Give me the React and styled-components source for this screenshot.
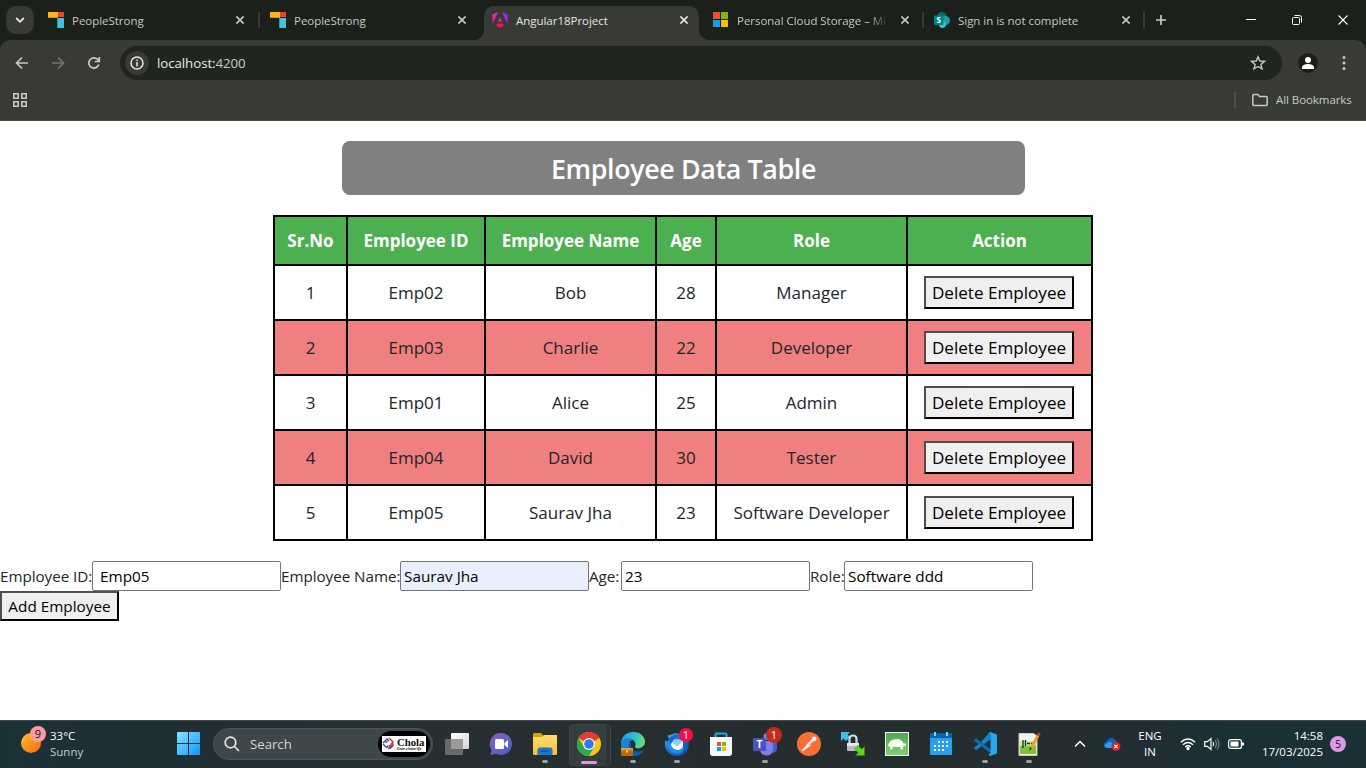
import React from 'react';
import styled, { createGlobalStyle, css } from 'styled-components';

const GlobalStyle = createGlobalStyle`
  * { box-sizing: border-box; }
  html, body { margin: 0; padding: 0; overflow: hidden; }
  body, button, input { font-family: "Open Sans", "Noto Sans", sans-serif; }
  svg { display: block; flex: none; }
`;

const Screen = styled.div`
  display: flex;
  flex-direction: column;
  width: 1366px;
  height: 768px;
  background: #fff;
  overflow: hidden;
`;

/* ---------- browser ---------- */

const TabStrip = styled.div`
  display: flex;
  align-items: flex-start;
  height: 40px;
  padding: 6px 0 0 6px;
  background: #1c201b;
  color: #c6cac1;
`;

const TabSearch = styled.div`
  display: grid;
  place-items: center;
  width: 28px;
  height: 28px;
  margin-right: 6px;
  border-radius: 10px;
  background: #383b35;
`;

const curve = css`
  content: "";
  position: absolute;
  bottom: 0;
  width: 10px;
  height: 10px;
`;

const Tab = styled.div`
  position: relative;
  display: flex;
  align-items: center;
  width: 215px;
  height: 34px;
  padding: 0 9px 6px 8px;
  font-size: 11.5px;
  ${(p) => p.$active && css`
    background: #383b35;
    color: #e4e7df;
    border-radius: 10px 10px 0 0;
    &::before { ${curve} left: -10px; background: radial-gradient(circle at 0 0, transparent 9.5px, #383b35 10.5px); }
    &::after { ${curve} right: -10px; background: radial-gradient(circle at 100% 0, transparent 9.5px, #383b35 10.5px); }
  `}
`;

const TabTitle = styled.div`
  flex: none;
  width: 151px;
  margin: 1px 13px 0 8px;
  white-space: nowrap;
  letter-spacing: ${(p) => (p.$fade ? -0.04 : -0.03)}px;
  ${(p) => p.$fade && css`mask-image: linear-gradient(90deg, #000 132px, transparent 151px);`}
`;

const Separator = styled.div`
  width: 2px;
  height: 16px;
  margin: 6px 2px 0 ${(p) => p.$left}px;
  background: ${(p) => (p.$hidden ? 'transparent' : '#383b35')};
`;

const NewTab = styled.div`
  display: grid;
  place-items: center;
  width: 28px;
  height: 28px;
`;

const WindowControls = styled.div`
  display: flex;
  width: 138px;
  height: 28px;
  margin-left: auto;
  > * { flex: 1; display: grid; place-items: center; }
`;

const ToolbarBack = styled.div`background: #1c201b;`;

const Toolbar = styled.div`
  display: flex;
  align-items: center;
  height: 40px;
  padding: 6px 14px 0 14px;
  border-radius: 10px 10px 0 0;
  background: #383b35;
`;

const NavButton = styled.div`
  width: 16px;
  margin-right: 20px;
  color: ${(p) => (p.$dim ? '#73766f' : '#c6cac1')};
`;

const AddressBar = styled.div`
  display: flex;
  flex: none;
  align-items: center;
  width: 1162px;
  height: 34px;
  margin-left: -2px;
  padding: 0 16px 0 5px;
  border-radius: 17px;
  background: #21251f;
  color: #c9cdc4;
  font-size: 13.3px;
  letter-spacing: -0.07px;
`;

const SiteInfo = styled.div`
  display: grid;
  place-items: center;
  width: 24px;
  height: 24px;
  margin-right: 8px;
  border-radius: 50%;
  background: #383b35;
`;

const Host = styled.span`color: #e9ece4;`;
const StarSlot = styled.div`margin-left: auto;`;

const Avatar = styled.div`
  display: grid;
  flex: none;
  place-items: center;
  width: 20px;
  height: 20px;
  margin: 0 18px 0 16px;
  border-radius: 50%;
  background: #1a1e19;
`;

const MenuSlot = styled.div`
  display: flex;
  flex: 1;
  justify-content: flex-end;
`;

const Bookmarks = styled.div`
  display: flex;
  align-items: center;
  height: 41px;
  padding: 0 14px 1px 13px;
  border-bottom: 1px solid #454842;
  background: #383b35;
  color: #c6cac1;
  font-size: 11.5px;
`;

const BookmarkRule = styled.div`
  width: 2px;
  height: 16px;
  margin: 0 16px 0 auto;
  background: #4d514a;
`;

const AllBookmarks = styled.div`
  width: 76px;
  margin-left: 8px;
  white-space: nowrap;
  letter-spacing: -0.07px;
`;

/* ---------- page ---------- */

const Page = styled.main`
  flex: 1;
  padding-top: 20px;
  color: #212529;
`;

const Title = styled.h1`
  width: 683px;
  height: 54px;
  margin: 0 auto 20px 342px;
  border-radius: 8px;
  background: #808080;
  color: #fff;
  font-size: 26.8px;
  font-weight: 600;
  line-height: 56px;
  letter-spacing: -0.35px;
  text-align: center;
`;

const Table = styled.table`
  width: 820px;
  margin-left: 273px;
  table-layout: fixed;
  border-collapse: collapse;
  font-size: 17px;
  text-align: center;
`;

const Th = styled.th`
  height: 49px;
  padding: 0;
  border: 2px solid #000;
  background: #4caf50;
  color: #fff;
  font-weight: 700;
  white-space: nowrap;
`;

const Row = styled.tr`background: ${(p) => (p.$striped ? '#f08080' : '#fff')};`;

const Td = styled.td`
  height: 55px;
  padding: 0;
  border: 2px solid #000;
  white-space: nowrap;
`;

const Button = styled.button`
  display: block;
  width: ${(p) => p.$width}px;
  height: ${(p) => p.$height}px;
  margin: 0 0 0 ${(p) => p.$indent || 0}px;
  padding: 0;
  border: 2px solid;
  border-color: #4f4f4f #000 #000 #4f4f4f;
  background: #efefef;
  color: #000;
  font-size: ${(p) => p.$size}px;
  white-space: nowrap;
`;

const Form = styled.form`
  display: flex;
  margin-top: 20px;
  font-size: 15.2px;
`;

const Label = styled.label`
  width: ${(p) => p.$width}px;
  height: 30px;
  line-height: 31px;
  white-space: nowrap;
  letter-spacing: -0.03px;
`;

const Input = styled.input`
  width: 189px;
  height: 30px;
  padding: 0 3px 1px;
  border: 1px solid #767676;
  border-radius: 2px;
  outline: 0;
  background: ${(p) => (p.$filled ? '#e8f0fe' : '#fff')};
  color: #000;
  font-size: 15.3px;
`;

/* ---------- taskbar ---------- */

const Taskbar = styled.footer`
  display: flex;
  align-items: center;
  height: 48px;
  padding-bottom: 2px;
  border-top: 1px solid #3c484b;
  background: linear-gradient(90deg, #1b3138 0, #1f2f34 150px, #262f31 430px, #252c2e 900px, #242d30 1080px, #1b3036 1220px, #1a3036 100%);
  color: #fff;
  font-size: 11.5px;
`;

const Weather = styled.div`
  display: flex;
  align-items: center;
  width: 172px;
  padding-left: 18px;
`;

const WeatherText = styled.div`
  margin-left: 4px;
  line-height: 16px;
  color: #c8cfd1;
  b { display: block; font-weight: 400; color: #fff; }
`;

const StartSlot = styled.div`
  width: 41px;
  padding-left: 5px;
`;

const Search = styled.div`
  display: flex;
  align-items: center;
  width: 220px;
  height: 32px;
  margin-right: 2px;
  padding: 0 2px 0 10px;
  border: 1px solid #4c5658;
  border-radius: 16px;
  background: #3e484a;
  color: #d2d6d7;
  font-size: 13.2px;
  > span { margin-left: 10px; }
`;

const Promo = styled.div`
  display: flex;
  align-items: center;
  width: 52px;
  height: 26px;
  margin-left: auto;
  padding-left: 4px;
  border-radius: 13px;
  background: #000;
`;

const PromoCard = styled.div`
  display: flex;
  align-items: center;
  width: 44px;
  height: 16px;
  background: #fff;
`;

const PromoText = styled.div`
  margin-left: 2px;
  color: #111;
  font: 700 10.8px/10px "Liberation Serif", serif;
  letter-spacing: -0.05px;
  white-space: nowrap;
  small { display: block; font: italic 700 3.6px/4px "Liberation Serif", serif; letter-spacing: -0.1px; }
`;

const AppSlot = styled.div`
  position: relative;
  display: grid;
  place-items: center;
  width: 44px;
  height: 40px;
  ${(p) => p.$focused && css`
    &::before, &::after {
      content: "";
      position: absolute;
      top: 0;
      left: 2px;
      height: 40px;
      border: 1px solid #3b4345;
      border-radius: 4px;
    }
    &::before { width: 40px; background: #2b3335; }
    &::after { width: 35px; background: #363d3f; }
  `}
  > svg { position: relative; z-index: 1; }
`;

const Indicator = styled.i`
  position: absolute;
  z-index: 2;
  bottom: ${(p) => (p.$focused ? 0 : 1)}px;
  left: 50%;
  width: ${(p) => (p.$focused ? 16 : 6)}px;
  height: 3px;
  border-radius: 2px;
  background: ${(p) => (p.$focused ? '#d998e0' : '#9a9fa0')};
  transform: translateX(-50%);
`;

const AppBadge = styled.span`
  position: absolute;
  z-index: 2;
  top: ${(p) => p.$top}px;
  left: ${(p) => p.$left}px;
  width: ${(p) => p.$size}px;
  height: ${(p) => p.$size}px;
  border-radius: 50%;
  background: ${(p) => p.$color};
  color: ${(p) => p.$ink || '#fff'};
  font-size: ${(p) => p.$font || 11}px;
  line-height: ${(p) => p.$size}px;
  text-align: center;
`;

const WeatherIcon = styled.div`
  position: relative;
  width: 28px;
  height: 32px;
`;

const Tray = styled.div`
  display: flex;
  align-items: center;
  margin-left: 23px;
`;

const Stacked = styled.div`
  width: ${(p) => p.$width}px;
  margin-left: ${(p) => p.$left}px;
  text-align: ${(p) => p.$align};
  line-height: 16px;
  white-space: nowrap;
`;

const TrayIcon = styled.div`margin-left: ${(p) => p.$left}px;`;

const CountBadge = styled.div`
  width: 16px;
  height: 16px;
  margin-left: 7px;
  border-radius: 50%;
  background: #dd9ae3;
  color: #111;
  font-size: 10px;
  line-height: 16px;
  text-align: center;
`;

/* ---------- icons ---------- */

const Cross = ({ size = 8, w = 1.6, color = 'currentColor' }) => (
  <svg width={size} height={size} viewBox="0 0 8 8" fill="none" stroke={color} strokeWidth={w}><path d="M.4.4l7.2 7.2M7.6.4L.4 7.6" /></svg>
);

const PeopleStrong = () => (
  <svg width="16" height="16"><path fill="#ffb612" d="M0 0h10v5H0z" /><path fill="#ef4136" d="M10 0h6v5h-6z" /><path fill="#41c4dc" d="M10 6h6v10h-6z" /><path fill="#1e9eb8" d="M9 6h1v10H9z" /><path fill="#d99200" d="M0 5h10v1H0z" /></svg>
);

const AngularIcon = () => (
  <svg width="16" height="16" viewBox="0 0 16 16">
    <defs><linearGradient id="ng" x1="0" y1=".7" x2="1" y2=".2"><stop stopColor="#f5187b" /><stop offset=".5" stopColor="#e52bd0" /><stop offset="1" stopColor="#7a1cff" /></linearGradient></defs>
    <path fill="url(#ng)" d="M10 0l5.8 2.5-.6 9L10 0zM6 0L.2 2.500l.6 9L6 0zM8 5.200L6.200 9.400h3.600z" />
    <path fill="#f8114e" d="M5.300 11.500h5.400l1.300 2.200L8 16l-4-2.300z" />
  </svg>
);

const MicrosoftIcon = () => (
  <svg width="16" height="16"><path fill="#f25022" d="M0 0h7v7H0z" /><path fill="#7fba00" d="M8 0h7v7H8z" /><path fill="#00a4ef" d="M0 8h7v7H0z" /><path fill="#ffb900" d="M8 8h7v7H8z" /></svg>
);

const SharePointIcon = () => (
  <svg width="16" height="16">
    <circle cx="8" cy="5" r="5" fill="#036c70" /><circle cx="11.500" cy="8.500" r="4.500" fill="#1a9ba1" /><circle cx="8.500" cy="12.500" r="3.400" fill="#37c6d0" />
    <rect y="3.500" width="9.500" height="9.500" rx="1" fill="#038387" />
    <text x="4.800" y="11.200" fill="#fff" fontFamily="Open Sans" fontWeight="700" fontSize="8" textAnchor="middle">S</text>
  </svg>
);

const Arrow = ({ flip }) => (
  <svg width="16" height="16" fill="none" stroke="currentColor" strokeWidth="1.700"><path transform={flip ? 'matrix(-1 0 0 1 16 0)' : undefined} d="M14 8H3M8 2.500L2.500 8 8 13.500" /></svg>
);

const Reload = () => (
  <svg width="16" height="16" fill="none" stroke="currentColor" strokeWidth="1.700"><path d="M12.800 9.500A5.100 5.100 0 1 1 11.600 4.400l1.500 1.700M13.300 2v4.500H8.800" /></svg>
);

const AppsGrid = () => (
  <svg width="14" height="14" fill="none" stroke="#c6cac1" strokeWidth="1.600"><path d="M.8.800h4.400v4.400H.8zM8.800.800h4.400v4.400H8.800zM.8 8.800h4.400v4.400H.8zM8.800 8.800h4.400v4.400H8.800z" /></svg>
);

const StartIcon = () => (
  <svg width="23" height="23">
    <defs><linearGradient id="win" x1="0" y1="0" x2="1" y2="1"><stop stopColor="#86e4ff" /><stop offset="1" stopColor="#0a97ff" /></linearGradient></defs>
    <path fill="url(#win)" d="M0 .8Q0 0 .8 0H11v11H0zM12 0h10.200q.8 0 .8.800V11H12zM0 12h11v11H.8Q0 23 0 22.200zM12 12h11v10.200q0 .8-.8.800H12z" />
  </svg>
);

const CholaMark = () => (
  <svg width="13" height="13" viewBox="0 0 13 13" fill="none" strokeWidth="1.500">
    <path stroke="#2a5cae" d="M1 6l4-4 2 2M1 7l3.500 3.500 2-2" />
    <path stroke="#e0323c" d="M7 1l4 4-2 2M3.500 6l2-2M6 12l5.500-5.500M7 9.500l2-2" />
    <path stroke="#2a5cae" d="M7.500 12l4-4" />
  </svg>
);

const TaskView = () => (
  <svg width="24" height="24"><defs><linearGradient id="tv" x1="0" y1="0" x2="1" y2="1"><stop stopColor="#fff" /><stop offset="1" stopColor="#d4d6d6" /></linearGradient></defs><rect x="6" y="1" width="18" height="16" rx="1" fill="url(#tv)" /><rect y="7" width="18" height="16" rx="1" fill="#686a6b" /><path fill="#9a9c9c" d="M6 7h12v10H6z" /></svg>
);

const ChatIcon = () => (
  <svg width="24" height="24"><defs><linearGradient id="ch" x1="0" y1="0" x2="1" y2="1"><stop stopColor="#9858b4" /><stop offset=".5" stopColor="#6264c4" /><stop offset="1" stopColor="#4e59ca" /></linearGradient></defs><path fill="url(#ch)" d="M12 1a11 11 0 1 1-5 20.800L1.500 23l1-5A11 11 0 0 1 12 1z" /><rect x="6" y="7" width="9" height="10" rx="1.500" fill="#fff" /><path fill="#fff" d="M15.500 11l3.500-3v8l-3.500-3z" /></svg>
);

const Folder = () => (
  <svg width="24" height="24"><defs><linearGradient id="fo" x1="0" y1="0" x2="0" y2="1"><stop stopColor="#ffdc70" /><stop offset="1" stopColor="#fbc02d" /></linearGradient></defs><path fill="#dca000" d="M0 2q0-1 1-1h7l2.500 3H24v3H0z" /><path fill="url(#fo)" d="M0 5h9l2-2h13v19q0 1-1 1H1q-1 0-1-1z" /><path fill="#1479cf" d="M4.500 23v-5q0-2.500 2.500-2.500h10q2.500 0 2.500 2.500v5z" /><path fill="#0b5ba6" d="M8 18.500h8V20H8z" /></svg>
);

const Chrome = () => (
  <svg width="24" height="24" viewBox="0 0 24 24"><circle cx="12" cy="12" r="12" fill="#fbc116" /><path fill="#e33b2e" d="M12 12L1.600 6A12 12 0 0 1 22.400 6z" /><path fill="#2da94f" d="M1.600 6A12 12 0 0 0 12 24l5.200-9L12 12 6.800 15z" /><circle cx="12" cy="12" r="6" fill="#fff" /><circle cx="12" cy="12" r="4.800" fill="#2f7cf0" /></svg>
);

const Edge = () => (
  <svg width="24" height="24" viewBox="0 0 24 24"><defs><linearGradient id="ed" x1="0" y1=".3" x2="1" y2=".5"><stop stopColor="#1e9ee8" /><stop offset=".6" stopColor="#34c5c1" /><stop offset="1" stopColor="#66e36c" /></linearGradient></defs>
    <path fill="#0d5fb6" d="M1 10c1 8 5 13 12 14 4 0 8-2 10-6-8 4-14 0-13-7z" /><path fill="url(#ed)" d="M0 12C0 4 6 0 12 0c8 0 12 5 12 10 0 6-9 8-10 5 1-2 1-8-6-8-4 0-7 2-8 5z" /><path fill="#1687d8" d="M.2 10C1 6 8 5 12 8c-3 0-5 4-4 8H0z" />
    <rect y="16" width="12" height="8" rx="1" fill="#b9680c" /><path fill="#e79a2d" d="M0 16h12v2.500H0z" /><path fill="#ffe08a" d="M5 18.500h2v2H5z" /></svg>
);

const Thunderbird = () => (
  <svg width="24" height="24" viewBox="0 0 24 24">
    <defs><linearGradient id="tb" x1="0" y1="0" x2="1" y2="1"><stop stopColor="#4ac2ff" /><stop offset=".4" stopColor="#1373d9" /><stop offset="1" stopColor="#0c4cb0" /></linearGradient></defs>
    <path fill="url(#tb)" d="M4 7L2.500 3C6 4 8 1 12 1l11 7c3 9-3 16-11 16S-2 17 .5 8l2 2z" />
    <path fill="#8ccdf8" d="M6 9q6-4 12 0v6q-2 4-6 4-5 0-6-5z" />
    <path fill="#fff" d="M6 9.500l6 5 6-5v4.500q-2 4-6 4-4.500 0-6-4z" />
    <path fill="#2489e8" d="M1 10q2 2 4.500 1 1 6.500 7.500 7 4 0 6.500-4Q18.500 22 12 22 3.500 21 1 10z" />
    <path fill="#1a64ca" d="M4 7q4-5 10-4l-5 4-3 5z" />
  </svg>
);

const Store = () => (
  <svg width="24" height="24"><path d="M6.500 6V2.500q0-1 1-1h9q1 0 1 1V6" fill="none" stroke="#16b0ee" strokeWidth="2" /><path fill="#f5f7f8" d="M1 5h22v16q0 3-3 3H4q-3 0-3-3z" /><path fill="#f25022" d="M8 10h4v4H8z" /><path fill="#7fba00" d="M13 10h4v4h-4z" /><path fill="#00a4ef" d="M8 15h4v4H8z" /><path fill="#ffb900" d="M13 15h4v4h-4z" /></svg>
);

const Teams = () => (
  <svg width="24" height="24"><circle cx="14" cy="4.500" r="3.500" fill="#7b83eb" /><circle cx="21" cy="6" r="2.500" fill="#5059c9" /><path fill="#5059c9" d="M17 9h7v8q-1 4-5 4z" /><path fill="#7b83eb" d="M8 9h12v9q-1 5.500-6.500 5.500T7 18z" /><rect y="6" width="13" height="13" rx="1" fill="#4b53bc" /><text x="6.500" y="16" fill="#fff" fontFamily="Open Sans" fontWeight="700" fontSize="10" textAnchor="middle">T</text></svg>
);

const Postman = () => (
  <svg width="24" height="24"><circle cx="12" cy="12" r="12" fill="#ff6c37" /><path stroke="#fff" strokeWidth="2.600" d="M16.500 7.500l-6 6" /><circle cx="17.300" cy="6.700" r="2.200" fill="#fff" /><path stroke="#fff" strokeWidth="1.200" d="M11 12.500l-6 6.500M13.500 13L6 18.500" /><path stroke="#ff6c37" strokeWidth=".7" d="M15.500 9.500l-4 4" /></svg>
);

const LockSync = () => (
  <svg width="24" height="24"><path fill="#38c0f5" d="M0 0h9L6.500 2.500 9 5 5 9 2.500 6.500 0 9z" /><path fill="none" stroke="#d9dcdd" strokeWidth="2.200" d="M8.500 12V7q0-3.500 3.500-3.500T15.500 7v5" /><rect x="6" y="11" width="12" height="8" rx="1" fill="#b7bcbe" /><path fill="#e5e8e9" d="M6 11h12v3H6z" /><path fill="#5bd51f" stroke="#2c8f0b" strokeWidth=".6" d="M23.500 23.500h-9l2.800-2.800-3.800-3.800 3.500-3.500 3.800 3.800 2.700-2.700z" /></svg>
);

const Tortoise = () => (
  <svg width="24" height="24"><defs><linearGradient id="to" x1="0" y1="0" x2="0" y2="1"><stop stopColor="#4aa84a" /><stop offset="1" stopColor="#83cf74" /></linearGradient></defs><rect x=".5" y=".5" width="23" height="23" fill="url(#to)" stroke="#f1f8ef" /><path fill="#f4fff2" d="M3 14q1-7 9-7 5 0 6.500 4.500 2.500-1 2.800 1.200-.3 2-3.300 1.800v3h-2.500V15H7.500v2.500H5V15z" /></svg>
);

const Calendar = () => (
  <svg width="22" height="24"><rect y="2" width="22" height="21" rx="1" fill="#24a2ee" /><path fill="#0b62b2" d="M0 1h22v5H0z" /><path stroke="#79d7ff" strokeWidth="2" d="M5 0v4M17 0v4" /><path stroke="#fff" strokeWidth="2" strokeDasharray="2 2" d="M8 10h10M4 14h14M4 18h10" /></svg>
);

const VSCode = () => (
  <svg width="24" height="24" viewBox="0 0 24 24"><path fill="none" stroke="#1486d0" strokeWidth="3.300" strokeLinejoin="round" d="M18 5L2 17" /><path fill="none" stroke="#0a6fb8" strokeWidth="3.300" d="M18 19.500L2 7.500" /><path fill="#25a7f1" d="M17 0l7 2.500v19L17 24l-1.500-1.500 2-1.500V3l-2-1.500z" /><path fill="#1486d0" d="M17 0l1 6-7 5.500-2.500-2z" /></svg>
);

const NotepadPP = () => (
  <svg width="24" height="24"><path fill="#f4f5f3" stroke="#c9ccc6" d="M2 1.500h15l3 3v19H2z" /><path fill="#77c72f" d="M3 13h16v9H3z" /><path fill="#c5eaa0" d="M3 9h16v5H3z" /><path fill="none" stroke="#242a22" strokeWidth="1.300" d="M6 8v8M8.500 8v6M10 11.500h3M14 11.500h2" /><path stroke="#e9a321" strokeWidth="3" d="M21 3.500L14 16" /><path stroke="#b8413f" strokeWidth="3" d="M22.500 1l-1.500 2.500" /><path fill="#3c3023" d="M13 15l2 1.500-3 2.500z" /></svg>
);

const Cloud = () => (
  <svg width="17" height="14"><path fill="#0b63c0" d="M3 11a3.300 3.300 0 0 1-.5-6.500Q4 1 7.500 1 11 1 12 4.500q3 .5 3 3.500T12 11z" /><path fill="#2b9bf0" d="M2 7l4-2.500 7 5-1 1.500H3Q.500 10.500.5 8z" /><circle cx="12" cy="9.500" r="4.500" fill="#d8232f" /><path stroke="#fff" strokeWidth="1.200" d="M10.300 7.800l3.400 3.400M13.700 7.800l-3.400 3.400" /></svg>
);

/* ---------- data ---------- */

const tabs = [
  { title: 'PeopleStrong', Icon: PeopleStrong },
  { title: 'PeopleStrong', Icon: PeopleStrong, gap: 'hidden' },
  { title: 'Angular18Project', Icon: AngularIcon, active: true, gap: 'hidden' },
  { title: 'Personal Cloud Storage – Mi', Icon: MicrosoftIcon, fade: true },
  { title: 'Sign in is not complete', Icon: SharePointIcon },
];

const columns = [['Sr.No', 73], ['Employee ID', 138], ['Employee Name', 171], ['Age', 60], ['Role', 191], ['Action', 185]];

const employees = [
  ['Emp02', 'Bob', 28, 'Manager'],
  ['Emp03', 'Charlie', 22, 'Developer'],
  ['Emp01', 'Alice', 25, 'Admin'],
  ['Emp04', 'David', 30, 'Tester'],
  ['Emp05', 'Saurav Jha', 23, 'Software Developer'],
];

const fields = [
  ['Employee ID:', 92, ' Emp05'],
  ['Employee Name:', 119, 'Saurav Jha'],
  ['Age:', 32, '23'],
  ['Role:', 34, 'Software ddd'],
];

const apps = [
  { Icon: TaskView }, { Icon: ChatIcon }, { Icon: Folder, open: true }, { Icon: Chrome, open: true, focused: true }, { Icon: Edge, open: true },
  { Icon: Thunderbird, open: true, badge: { $top: 4, $left: 24, $size: 14, $color: '#fb0d43' } },
  { Icon: Store },
  { Icon: Teams, open: true, badge: { $top: 3, $left: 23, $size: 16, $color: '#c42b1c' } },
  { Icon: Postman }, { Icon: LockSync }, { Icon: Tortoise }, { Icon: Calendar }, { Icon: VSCode, open: true }, { Icon: NotepadPP, open: true },
];

function Browser() {
  return (
    <header>
      <TabStrip>
        <TabSearch><svg width="10" height="8" fill="none" stroke="#e4e7df" strokeWidth="1.800"><path d="M1.200 2L5 5.800 8.800 2" /></svg></TabSearch>
        {tabs.map(({ title, Icon, active, fade, gap }, i) => (
          <React.Fragment key={i}>
            <Tab $active={active}>
              <Icon />
              <TabTitle $fade={fade}>{title}</TabTitle>
              <Cross />
            </Tab>
            <Separator $hidden={gap === 'hidden'} $left={i > 1 ? 2 : 3} />
          </React.Fragment>
        ))}
        <NewTab><svg width="10" height="10" stroke="#c6cac1" strokeWidth="1.700"><path d="M5 0v10M0 5h10" /></svg></NewTab>
        <WindowControls>
          <div><svg width="10" height="10" stroke="#fff"><path d="M0 4.500h10" /></svg></div>
          <div><svg width="10" height="10" fill="none" stroke="#fff"><rect x=".5" y="2.500" width="7" height="7" rx="1" /><path d="M2.500.500h5q2 0 2 2v5" /></svg></div>
          <div><Cross size={10} w={0.9} color="#fff" /></div>
        </WindowControls>
      </TabStrip>
      <ToolbarBack>
        <Toolbar>
          <NavButton><Arrow /></NavButton>
          <NavButton $dim><Arrow flip /></NavButton>
          <NavButton><Reload /></NavButton>
          <AddressBar>
            <SiteInfo><svg width="14" height="14" fill="none" stroke="#e4e7df" strokeWidth="1.500"><circle cx="7" cy="7" r="6" /><path d="M7 6v4.500M7 3.500V5" /></svg></SiteInfo>
            <span><Host>localhost:</Host>4200</span>
            <StarSlot><svg width="16" height="16" fill="none" stroke="#c6cac1" strokeWidth="1.400"><path d="M8 1.800l1.800 4.200 4.600.4-3.500 3 1.100 4.500L8 11.500l-4 2.400 1.100-4.500-3.500-3L6.200 6z" /></svg></StarSlot>
          </AddressBar>
          <Avatar><svg width="14" height="14" fill="#fff"><circle cx="7" cy="4" r="3" /><path d="M1 13v-2q1-3 6-3t6 3v2z" /></svg></Avatar>
          <MenuSlot><svg width="16" height="16" fill="#c6cac1"><circle cx="8" cy="2.500" r="1.500" /><circle cx="8" cy="8" r="1.500" /><circle cx="8" cy="13.500" r="1.500" /></svg></MenuSlot>
        </Toolbar>
      </ToolbarBack>
      <Bookmarks>
        <AppsGrid />
        <BookmarkRule />
        <svg width="16" height="14" fill="none" stroke="#c6cac1" strokeWidth="1.500"><path d="M.8 11.500v-9q0-1 1-1h4l1.800 2h6.600q1 0 1 1v7q0 1-1 1H1.800q-1 0-1-1z" /></svg>
        <AllBookmarks>All Bookmarks</AllBookmarks>
      </Bookmarks>
    </header>
  );
}

function EmployeePage() {
  return (
    <Page>
      <Title>Employee Data Table</Title>
      <Table>
        <colgroup>{columns.map(([name, width]) => <col key={name} width={width} />)}</colgroup>
        <thead><tr>{columns.map(([name]) => <Th key={name}>{name}</Th>)}</tr></thead>
        <tbody>
          {employees.map((employee, i) => (
            <Row key={employee[0]} $striped={i % 2 === 1}>
              <Td>{i + 1}</Td>
              {employee.map((value) => <Td key={value}>{value}</Td>)}
              <Td><Button $indent={16} $width={150} $height={33} $size={17.1}>Delete Employee</Button></Td>
            </Row>
          ))}
        </tbody>
      </Table>
      <Form>
        {fields.map(([name, width, value]) => (
          <React.Fragment key={name}>
            <Label $width={width}>{name}</Label>
            <Input defaultValue={value} $filled={name === 'Employee Name:'} />
          </React.Fragment>
        ))}
      </Form>
      <Button $width={119} $height={30} $size={15.3}>Add Employee</Button>
    </Page>
  );
}

function SystemBar() {
  return (
    <Taskbar>
      <Weather>
        <WeatherIcon>
          <svg width="28" height="32"><defs><linearGradient id="sun" x1="0" y1="0" x2="1" y2="1"><stop stopColor="#ffbf2b" /><stop offset="1" stopColor="#f26a0c" /></linearGradient></defs><circle cx="13" cy="15" r="10" fill="url(#sun)" /></svg>
          <AppBadge $top={-2} $left={12} $size={16} $color="#ff99a4" $ink="#111" $font={11}>9</AppBadge>
        </WeatherIcon>
        <WeatherText><b>33°C</b>Sunny</WeatherText>
      </Weather>
      <StartSlot><StartIcon /></StartSlot>
      <Search>
        <svg width="16" height="16" fill="none" stroke="#e3e6e6" strokeWidth="1.700"><circle cx="6.500" cy="6.500" r="5.300" /><path d="M10.500 10.500l4.500 4.500" /></svg>
        <span>Search</span>
        <Promo><PromoCard><CholaMark /><PromoText>Chola<small>Enter a better life</small></PromoText></PromoCard></Promo>
      </Search>
      {apps.map(({ Icon, open, focused, badge }, i) => (
        <AppSlot key={i} $focused={focused}>
          <Icon />
          {badge && <AppBadge {...badge}>1</AppBadge>}
          {open && <Indicator $focused={focused} />}
        </AppSlot>
      ))}
      <Tray>
        <svg width="12" height="8" fill="none" stroke="#fff" strokeWidth="1.500"><path d="M1 6.500l5-5 5 5" /></svg>
        <TrayIcon $left={18}><Cloud /></TrayIcon>
        <Stacked $width={30} $left={14} $align="center">ENG<br />IN</Stacked>
        <TrayIcon $left={15}><svg width="16" height="14" fill="none" stroke="#fff" strokeWidth="1.300"><path d="M.8 5.200q7.200-6.500 14.400 0M3 7.700q5-4.500 10 0M5.200 10q2.800-2.500 5.600 0" /><circle cx="8" cy="11.500" r="1" fill="#fff" /></svg></TrayIcon>
        <TrayIcon $left={8}><svg width="16" height="14" fill="none" stroke="#fff" strokeWidth="1.200"><path d="M.7 4.700h2.600L7 1.500v11L3.300 9.300H.7z" /><path d="M9 5q1.500 2 0 4" /><path stroke="#78878b" d="M11 3q3 4 0 8M13 1.500q4 5.500 0 11" /></svg></TrayIcon>
        <TrayIcon $left={8}><svg width="16" height="12" fill="none" stroke="#fff" strokeWidth="1.200"><rect x=".6" y="1.600" width="12.800" height="8.800" rx="2" /><rect x="2.500" y="3.500" width="8" height="5" fill="#fff" stroke="none" /><path strokeWidth="2" d="M15 4.500v3" /></svg></TrayIcon>
        <Stacked $width={64} $left={15} $align="right">14:58<br />17/03/2025</Stacked>
        <CountBadge>5</CountBadge>
      </Tray>
    </Taskbar>
  );
}

export default function App() {
  return (
    <>
      <GlobalStyle />
      <Screen>
        <Browser />
        <EmployeePage />
        <SystemBar />
      </Screen>
    </>
  );
}
